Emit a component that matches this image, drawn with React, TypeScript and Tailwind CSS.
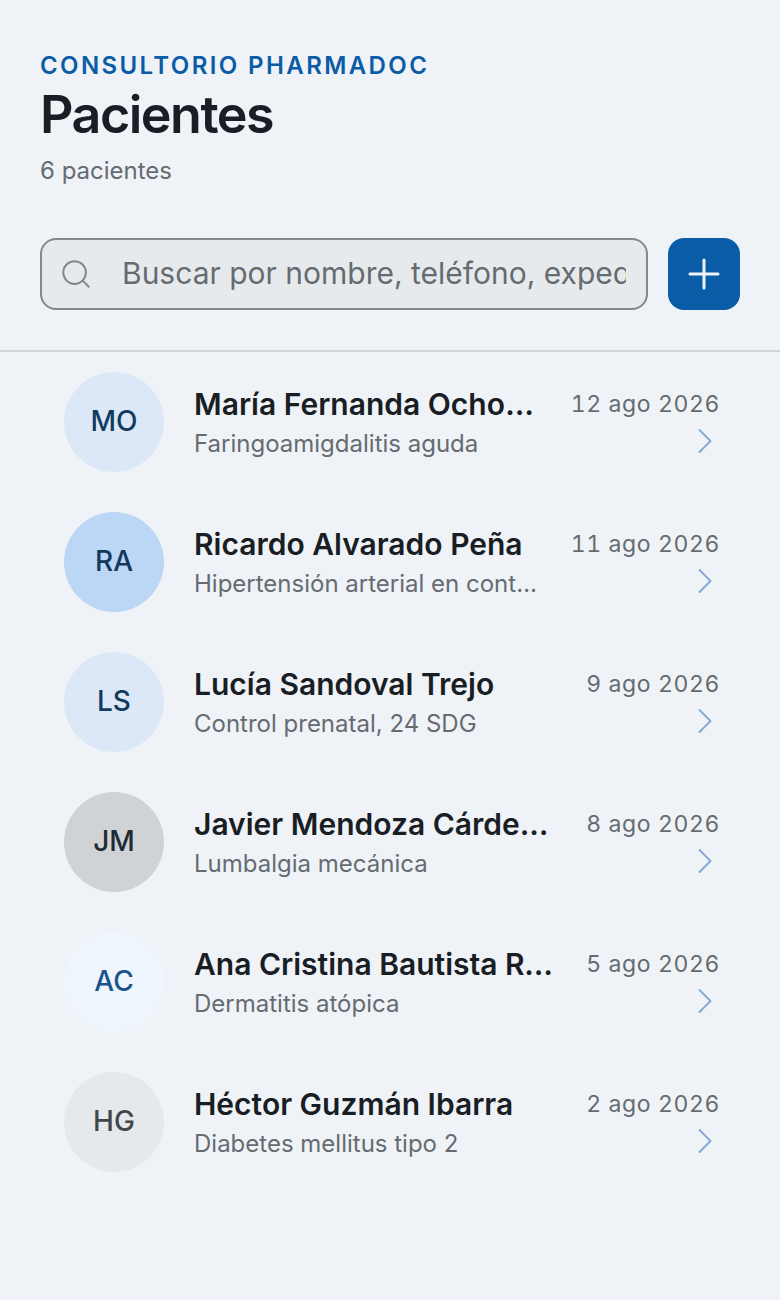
import { Plus, Search, ChevronRight } from 'lucide-react';

const patients = [
    { initials: 'MO', name: 'María Fernanda Ochoa Ruiz', note: 'Faringoamigdalitis aguda', date: '12 ago 2026', avatar: 'bg-[#dce8f8] text-[#123a5f]' },
    { initials: 'RA', name: 'Ricardo Alvarado Peña', note: 'Hipertensión arterial en control mensual', date: '11 ago 2026', avatar: 'bg-[#bcd6f6] text-[#123a5f]' },
    { initials: 'LS', name: 'Lucía Sandoval Trejo', note: 'Control prenatal, 24 SDG', date: '9 ago 2026', avatar: 'bg-[#dce8f8] text-[#123a5f]' },
    { initials: 'JM', name: 'Javier Mendoza Cárdenas', note: 'Lumbalgia mecánica', date: '8 ago 2026', avatar: 'bg-[#cfd3d6] text-[#1f2a33]' },
    { initials: 'AC', name: 'Ana Cristina Bautista Robles', note: 'Dermatitis atópica', date: '5 ago 2026', avatar: 'bg-[#eff5fd] text-[#1a5488]' },
    { initials: 'HG', name: 'Héctor Guzmán Ibarra', note: 'Diabetes mellitus tipo 2', date: '2 ago 2026', avatar: 'bg-[#e6e9ec] text-[#41474d]' },
];

export default function App() {
    return (
        <div className="min-h-[1300px] bg-[#eff3f7] font-['Inter',sans-serif]">
            {/* Header */}
            <div className="border-b-2 border-[#d3d7db] px-10 pt-[50px] pb-10">
                <p className="text-[24px] leading-[32px] font-semibold tracking-[2.4px] text-[#0b5ca6]">CONSULTORIO PHARMADOC</p>
                <h1 className="mt-[3px] text-[52px] leading-[60px] font-semibold tracking-[-1.5px] text-[#191d24]">Pacientes</h1>
                <p className="mt-[10px] text-[24px] leading-[32px] text-[#656b71]">6 pacientes</p>

                <div className="mt-[51px] flex gap-5">
                    <div className="flex h-[72px] min-w-0 flex-1 items-center rounded-2xl border-[2px] border-[#83888d] bg-[#e6eaed] pr-5 pl-[17px]">
                        <Search className="h-[34px] w-[34px] shrink-0 text-[#83888d]" strokeWidth={1.4} />
                        <input
                            className="ml-[29px] min-w-0 flex-1 bg-transparent pb-[2px] text-[30px] text-[#191d24] outline-none placeholder:text-[#656b71]"
                            placeholder="Buscar por nombre, teléfono, expediente"
                        />
                    </div>
                    <button className="flex h-[72px] w-[72px] items-center justify-center rounded-2xl bg-[#0b5ca6] text-[#eff3f7]">
                        <Plus className="h-[48px] w-[48px]" strokeWidth={1.5} />
                    </button>
                </div>
            </div>

            {/* Patient list */}
            <div>
                {patients.map((p) => (
                    <div key={p.initials} className="flex h-[140px] items-center pr-[60px] pl-[64px]">
                        <div className={`flex h-[100px] w-[100px] shrink-0 items-center justify-center rounded-full pb-[2px] text-[28px] font-medium ${p.avatar}`}>
                            {p.initials}
                        </div>
                        <div className="ml-[30px] min-w-0 flex-1">
                            <p className="truncate text-[30px] leading-[40px] font-semibold text-[#191d24]">{p.name}</p>
                            <p className="mt-[4px] truncate pr-2 text-[24px] leading-[32px] text-[#656b71]">{p.note}</p>
                        </div>
                        <div className="ml-6 flex shrink-0 flex-col items-end">
                            <span className="text-[23px] leading-[32px] tracking-[0.6px] tabular-nums text-[#656b71]">{p.date}</span>
                            <ChevronRight className="-mt-[1px] -mr-[7px] -mb-[7px] h-[44px] w-[44px] text-[#7fa8d4]" strokeWidth={1} />
                        </div>
                    </div>
                ))}
            </div>
        </div>
    );
}
